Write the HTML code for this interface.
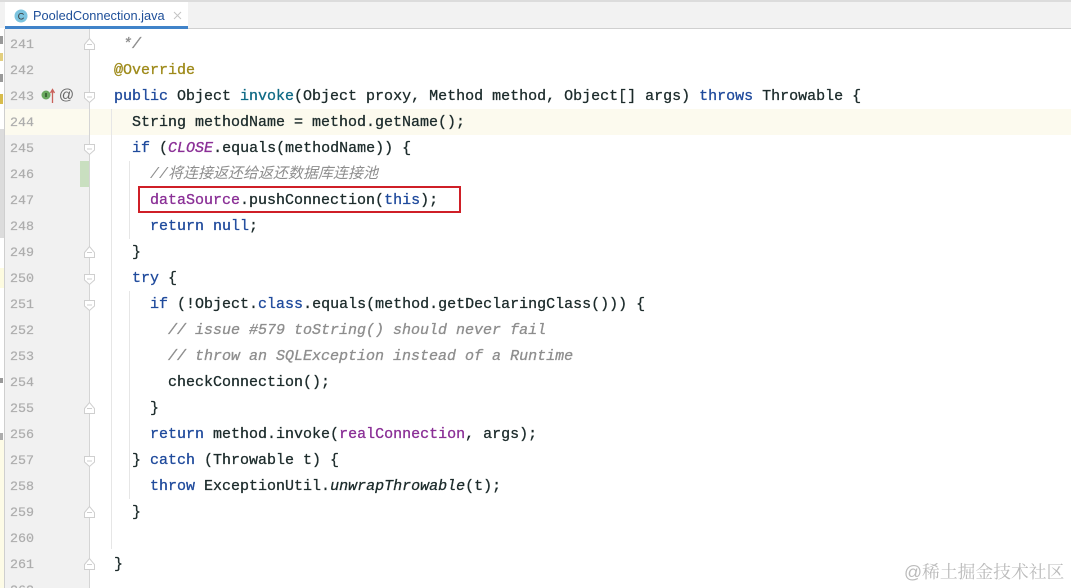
<!DOCTYPE html>
<html><head><meta charset="utf-8">
<style>
html,body{margin:0;padding:0;background:#fff}
#p{position:relative;width:1071px;height:588px;overflow:hidden;background:#fff;font-family:"Liberation Mono",monospace}
.a{position:absolute}
.l{position:absolute;left:114px;height:26px;line-height:26px;font-size:15px;color:#1c2b2b;white-space:pre;-webkit-text-stroke:.3px}
.n{position:absolute;left:10px;height:26px;line-height:26px;font-size:13.33px;color:#adadad;-webkit-text-stroke:.2px}
.k{color:#1f4a9c}.f{color:#0f6a85}.m{color:#8a2f96}.c{color:#8e8e8e;font-style:italic}.an{color:#9e8a1a}
.i{font-style:italic}
</style></head><body><div id="p">
<!-- tab bar -->
<div class="a" style="left:0;top:0;width:1071px;height:28px;background:#f2f2f2"></div>
<div class="a" style="left:0;top:0;width:1071px;height:2px;background:#dcdcdc"></div>
<div class="a" style="left:5px;top:2px;width:183px;height:24px;background:#fff"></div>
<div class="a" style="left:5px;top:26px;width:183px;height:3px;background:#4083c9"></div>
<div class="a" style="left:188px;top:28px;width:883px;height:1px;background:#d0d0d0"></div>
<svg class="a" style="left:14px;top:9px" width="14" height="14"><circle cx="7" cy="7" r="6.5" fill="#7cc4df"/><text x="7" y="10.500" font-family="Liberation Sans" font-size="9" fill="#333" text-anchor="middle">C</text></svg>
<div class="a" style="left:33px;top:7px;font:12.8px/17px 'Liberation Sans',sans-serif;color:#1e4f99;white-space:pre">PooledConnection.java</div>
<svg class="a" style="left:172px;top:10px" width="11" height="11"><path d="M2 2L9 9M9 2L2 9" stroke="#c4c4c4" stroke-width="1" fill="none"/></svg>
<!-- left strip -->
<div class="a" style="left:0;top:29px;width:4px;height:559px;background:#fff"></div>
<div class="a" style="left:0;top:129px;width:4px;height:109px;background:#dcdcdc"></div>
<div class="a" style="left:0;top:36px;width:3px;height:8px;background:#555;opacity:.6"></div>
<div class="a" style="left:0;top:53px;width:3px;height:8px;background:#c8a000;opacity:.5"></div>
<div class="a" style="left:0;top:74px;width:3px;height:8px;background:#555;opacity:.6"></div>
<div class="a" style="left:0;top:94px;width:3px;height:10px;background:#c8a000;opacity:.7"></div>
<div class="a" style="left:0;top:268px;width:4px;height:20px;background:#fdfbe0"></div>
<div class="a" style="left:0;top:378px;width:3px;height:5px;background:#555;opacity:.6"></div>
<div class="a" style="left:0;top:433px;width:3px;height:10px;background:#777;opacity:.6"></div>
<div class="a" style="left:0;top:440px;width:4px;height:148px;background:#fdfbe6"></div>
<div class="a" style="left:4px;top:29px;width:1px;height:559px;background:#cfcfcf"></div>
<!-- gutter -->
<div class="a" style="left:5px;top:29px;width:84px;height:559px;background:#f1f1f1"></div>
<div class="a" style="left:5px;top:109px;width:1066px;height:26px;background:#fcfaee"></div>
<div class="a" style="left:80px;top:161px;width:9px;height:26px;background:#c9dfc0"></div>
<div class="a" style="left:89px;top:29px;width:1px;height:559px;background:#d5d5d5"></div>
<div class="a" style="left:111px;top:109px;width:1px;height:440px;background:#e6e6e6"></div>
<div class="a" style="left:129px;top:161px;width:1px;height:78px;background:#e6e6e6"></div>
<div class="a" style="left:129px;top:291px;width:1px;height:208px;background:#e6e6e6"></div>
<!-- line numbers -->
<div class="n" style="top:33px">241</div><div class="n" style="top:59px">242</div><div class="n" style="top:85px">243</div><div class="n" style="top:111px">244</div><div class="n" style="top:137px">245</div><div class="n" style="top:163px">246</div><div class="n" style="top:189px">247</div><div class="n" style="top:215px">248</div><div class="n" style="top:241px">249</div><div class="n" style="top:267px">250</div><div class="n" style="top:293px">251</div><div class="n" style="top:319px">252</div><div class="n" style="top:345px">253</div><div class="n" style="top:371px">254</div><div class="n" style="top:397px">255</div><div class="n" style="top:423px">256</div><div class="n" style="top:449px">257</div><div class="n" style="top:475px">258</div><div class="n" style="top:501px">259</div><div class="n" style="top:527px">260</div><div class="n" style="top:553px">261</div><div class="n" style="top:579px">262</div>
<!-- gutter icons -->
<svg class="a" style="left:40px;top:87px" width="36" height="17"><circle cx="6" cy="8" r="4.500" fill="#6aa85f"/><path d="M6 6V10" stroke="#1d3d1a" stroke-width="1.200"/><path d="M12.500 16V3M10.500 6L12.500 2.500L14.500 6" stroke="#c9615a" stroke-width="1.300" fill="none"/><text x="26.500" y="12.500" font-family="Liberation Sans" font-size="15" fill="#666" text-anchor="middle">@</text></svg>
<svg class="a" style="left:0;top:0" width="100" height="588" fill="#fff" stroke="#cfcfcf">
<path d="M84.500 44.500L89.500 38.500L94.500 44.500V49.500H84.500Z"/><path d="M87 44.500H92"/>
<path d="M84.500 92.500H94.500V98L89.500 102.500L84.500 98Z"/><path d="M87 97H92"/>
<path d="M84.500 144.500H94.500V150L89.500 154.500L84.500 150Z"/><path d="M87 149H92"/>
<path d="M84.500 252.500L89.500 246.500L94.500 252.500V257.500H84.500Z"/><path d="M87 252.500H92"/>
<path d="M84.500 274.500H94.500V280L89.500 284.500L84.500 280Z"/><path d="M87 279H92"/>
<path d="M84.500 300.500H94.500V306L89.500 310.500L84.500 306Z"/><path d="M87 305H92"/>
<path d="M84.500 408.500L89.500 402.500L94.500 408.500V413.500H84.500Z"/><path d="M87 408.500H92"/>
<path d="M84.500 456.500H94.500V462L89.500 466.500L84.500 462Z"/><path d="M87 461H92"/>
<path d="M84.500 512.500L89.500 506.500L94.500 512.500V517.500H84.500Z"/><path d="M87 512.500H92"/>
<path d="M84.500 564.500L89.500 558.500L94.500 564.500V569.500H84.500Z"/><path d="M87 564.500H92"/>
</svg>
<!-- code -->
<div class="l c" style="top:32px"> */</div>
<div class="l an" style="top:58px">@Override</div>
<div class="l" style="top:84px"><span class="k">public</span> Object <span class="f">invoke</span>(Object proxy, Method method, Object[] args) <span class="k">throws</span> Throwable {</div>
<div class="l" style="top:110px">  String methodName = method.getName();</div>
<div class="l" style="top:136px">  <span class="k">if</span> (<span class="m i">CLOSE</span>.equals(methodName)) {</div>
<div class="l c" style="top:162px;left:150px;font-family:'Liberation Mono','Noto Sans CJK SC',monospace;-webkit-text-stroke:0">//将连接返还给返还数据库连接池</div>
<div class="l" style="top:188px">    <span class="m">dataSource</span>.pushConnection(<span class="k">this</span>);</div>
<div class="l" style="top:214px">    <span class="k">return null</span>;</div>
<div class="l" style="top:240px">  }</div>
<div class="l" style="top:266px">  <span class="k">try</span> {</div>
<div class="l" style="top:292px">    <span class="k">if</span> (!Object.<span class="k">class</span>.equals(method.getDeclaringClass())) {</div>
<div class="l c" style="top:318px">      // issue #579 toString() should never fail</div>
<div class="l c" style="top:344px">      // throw an SQLException instead of a Runtime</div>
<div class="l" style="top:370px">      checkConnection();</div>
<div class="l" style="top:396px">    }</div>
<div class="l" style="top:422px">    <span class="k">return</span> method.invoke(<span class="m">realConnection</span>, args);</div>
<div class="l" style="top:448px">  } <span class="k">catch</span> (Throwable t) {</div>
<div class="l" style="top:474px">    <span class="k">throw</span> ExceptionUtil.<span class="i">unwrapThrowable</span>(t);</div>
<div class="l" style="top:500px">  }</div>
<div class="l" style="top:552px">}</div>
<!-- red box -->
<div class="a" style="left:138px;top:186px;width:319px;height:23px;border:2px solid #cf1f27"></div>
<!-- watermark -->
<div class="a" style="left:904px;top:561px;font:17.8px/22px 'Liberation Sans','Noto Serif CJK SC',sans-serif;color:#bbb;white-space:pre">@稀土掘金技术社区</div>
</div></body></html>
